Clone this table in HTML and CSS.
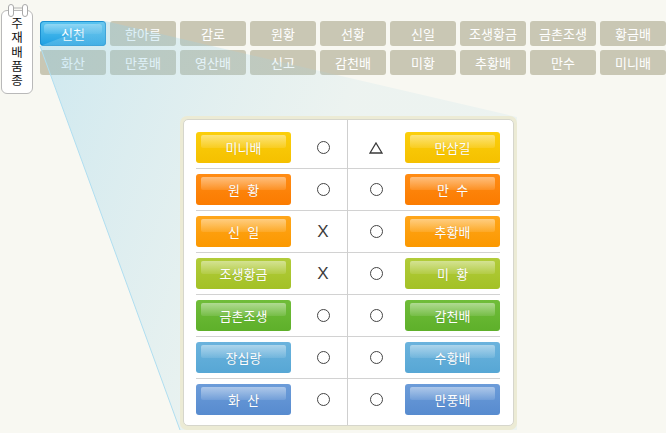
FILE: index.html
```html
<!DOCTYPE html>
<html lang="ko">
<head>
<meta charset="utf-8">
<title>주재배품종</title>
<link rel="stylesheet" href="styles.css">
</head>
<body>
<div class="page">
  <div class="top">
    <div class="label">
      <svg class="rings" width="24" height="14" viewBox="0 0 24 14">
        <line x1="5" y1="4" x2="19" y2="4" stroke="#b5b5b5" stroke-width="1"/>
        <rect x="2.5" y="0.5" width="5" height="12" rx="2.5" fill="#fff" stroke="#a9a9a9"/>
        <rect x="16.5" y="0.5" width="5" height="12" rx="2.5" fill="#fff" stroke="#a9a9a9"/>
      </svg>
      <span class="vtext">주재배품종</span>
    </div>
    <div class="tabs">
      <div class="tab active">신천</div>
      <div class="tab">한아름</div>
      <div class="tab">감로</div>
      <div class="tab">원황</div>
      <div class="tab">선황</div>
      <div class="tab">신일</div>
      <div class="tab">조생황금</div>
      <div class="tab">금촌조생</div>
      <div class="tab">황금배</div>
      <div class="tab">화산</div>
      <div class="tab">만풍배</div>
      <div class="tab">영산배</div>
      <div class="tab">신고</div>
      <div class="tab">감천배</div>
      <div class="tab">미황</div>
      <div class="tab">추황배</div>
      <div class="tab">만수</div>
      <div class="tab">미니배</div>
    </div>
  </div>

  <svg class="spot" width="666" height="433" viewBox="0 0 666 433">
    <defs>
      <linearGradient id="sg" gradientUnits="userSpaceOnUse" x1="50" y1="60" x2="330" y2="160">
        <stop offset="0" stop-color="#8bcfec" stop-opacity="0.36"/>
        <stop offset="1" stop-color="#a6d5e4" stop-opacity="0.14"/>
      </linearGradient>
    </defs>
    <polygon points="40,46 105,21 517,117 517,430 180,430" fill="url(#sg)"/>
    <line x1="40" y1="46" x2="180" y2="430" stroke="#b0def0" stroke-width="1"/>
  </svg>

  <div class="frame">
    <div class="card">
      <div class="col left">
        <div class="row"><div class="btn yellow">미니배</div><div class="mark"><span class="o"></span></div></div>
        <div class="row"><div class="btn orange">원&nbsp;&nbsp;황</div><div class="mark"><span class="o"></span></div></div>
        <div class="row"><div class="btn amber">신&nbsp;&nbsp;일</div><div class="mark"><span class="x">X</span></div></div>
        <div class="row"><div class="btn lime">조생황금</div><div class="mark"><span class="x">X</span></div></div>
        <div class="row"><div class="btn green">금촌조생</div><div class="mark"><span class="o"></span></div></div>
        <div class="row"><div class="btn sky">장십랑</div><div class="mark"><span class="o"></span></div></div>
        <div class="row"><div class="btn blue">화&nbsp;&nbsp;산</div><div class="mark"><span class="o"></span></div></div>
      </div>
      <div class="col right">
        <div class="row"><div class="mark"><svg class="tri" width="14" height="12" viewBox="0 0 14 12"><polygon points="7,1 13,11 1,11" fill="none" stroke="#3a3a3a" stroke-width="1.3" stroke-linejoin="miter"/></svg></div><div class="btn yellow">만삼길</div></div>
        <div class="row"><div class="mark"><span class="o"></span></div><div class="btn orange">만&nbsp;&nbsp;수</div></div>
        <div class="row"><div class="mark"><span class="o"></span></div><div class="btn amber">추황배</div></div>
        <div class="row"><div class="mark"><span class="o"></span></div><div class="btn lime">미&nbsp;&nbsp;황</div></div>
        <div class="row"><div class="mark"><span class="o"></span></div><div class="btn green">감천배</div></div>
        <div class="row"><div class="mark"><span class="o"></span></div><div class="btn sky">수황배</div></div>
        <div class="row"><div class="mark"><span class="o"></span></div><div class="btn blue">만풍배</div></div>
      </div>
    </div>
  </div>
</div>
</body>
</html>
```

FILE: styles.css
```css
html, body {
  margin: 0;
  padding: 0;
  background: #f8f8f2;
}

body {
  font-family: "Noto Sans CJK KR", "Noto Sans", sans-serif;
  font-size: 13px;
  width: 666px;
  height: 433px;
  overflow: hidden;
}

.page {
  position: relative;
  width: 666px;
  height: 433px;
}

.top {
  display: flex;
  align-items: flex-start;
  padding-left: 1px;
}

.label {
  position: relative;
  margin-top: 10px;
  width: 32px;
  height: 84px;
  box-sizing: border-box;
  border: 1px solid #b9b9b9;
  border-radius: 6px;
  background: #fff;
  display: flex;
  justify-content: center;
  padding-top: 5px;
}

.vtext {
  display: block;
  width: 14px;
  font-size: 12.5px;
  line-height: 14.3px;
  color: #111;
  word-break: break-all;
  text-align: center;
}

.rings {
  position: absolute;
  left: 4px;
  top: -7px;
}

.tabs {
  margin-top: 21px;
  margin-left: 7px;
  display: grid;
  grid-template-columns: repeat(9, 66px);
  grid-auto-rows: 25px;
  column-gap: 4px;
  row-gap: 4px;
}

.tab {
  background: #c9c7b4;
  border-radius: 3px;
  color: #fff;
  font-size: 13px;
  line-height: 25px;
  text-align: center;
}

.tab.active {
  position: relative;
  background: linear-gradient(#5cc6f1, #1e9fe2);
  box-shadow: inset 0 0 0 1px #1b8fd0;
  border-radius: 4px;
}

.tab.active::before {
  content: "";
  position: absolute;
  left: 4px;
  right: 4px;
  top: 3px;
  height: 10px;
  border-radius: 3px;
  background: linear-gradient(rgba(255,255,255,0.35), rgba(255,255,255,0.08));
}

.spot {
  position: absolute;
  left: 0;
  top: 0;
  pointer-events: none;
}

.frame {
  position: relative;
  z-index: 2;
  margin-top: 22px;
  margin-left: 180px;
  width: 337px;
  box-sizing: border-box;
  padding: 3px 3px 4px 3px;
  background: #ecebd5;
  border-radius: 7px;
}

.card {
  display: flex;
  background: #fff;
  border: 1px solid #d6d6cc;
  border-radius: 5px;
}

.col {
  display: flex;
  flex-direction: column;
  padding-top: 7px;
  padding-bottom: 5px;
}

.col.left {
  padding-left: 12px;
  border-right: 1px solid #cfcfcf;
}

.col.right {
  padding-right: 13px;
}

.row {
  display: flex;
  align-items: center;
  height: 41px;
  border-bottom: 1px solid #d2d2d2;
}

.row:last-child {
  border-bottom: none;
}

.left .mark {
  width: 48px;
  margin-left: 8px;
}

.right .mark {
  width: 56px;
  margin-right: 1px;
}

.mark {
  display: flex;
  align-items: center;
  justify-content: center;
  height: 41px;
}

.o {
  display: block;
  width: 11px;
  height: 11px;
  border: 1.4px solid #444;
  border-radius: 50%;
}

.x {
  font-family: "Liberation Sans", sans-serif;
  font-size: 17px;
  line-height: 17px;
  color: #3c3c3c;
}

.btn {
  position: relative;
  width: 95px;
  height: 31px;
  border-radius: 3px;
  color: #fff;
  font-size: 13px;
  line-height: 31px;
  text-align: center;
  text-shadow: 0 0 1px rgba(0,0,0,0.18);
  flex: none;
}

.btn::before {
  content: "";
  position: absolute;
  left: 5px;
  right: 5px;
  top: 3px;
  height: 13px;
  border-radius: 2px;
  background: linear-gradient(rgba(255,255,255,0.45), rgba(255,255,255,0.1));
}

.yellow { background: linear-gradient(#fbcf0c, #f5c000); }
.orange { background: linear-gradient(#ff8c14, #fb7b00); }
.amber  { background: linear-gradient(#ffa61a, #fb9800); }
.lime   { background: linear-gradient(#b2cc3a, #a3c126); }
.green  { background: linear-gradient(#70bd3a, #5eb02a); }
.sky    { background: linear-gradient(#6bb3dd, #57a7d5); }
.blue   { background: linear-gradient(#6c9cd9, #578bcf); }
```
